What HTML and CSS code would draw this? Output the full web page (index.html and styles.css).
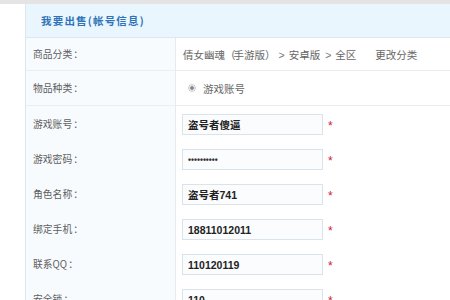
FILE: index.html
```html
<!DOCTYPE html>
<html lang="zh-CN">
<head>
<meta charset="utf-8">
<link rel="stylesheet" href="styles.css">
</head>
<body>
<div class="topbar"></div>
<div class="panel">
  <div class="head">我要出售(帐号信息)</div>
  <div class="row r-first">
    <div class="lab">商品分类<span class="colon">：</span></div>
    <div class="val"><span class="crumb">倩女幽魂<span class="par">（</span>手游版<span class="par">）</span><span class="gt">&gt;</span>安卓版<span class="gt">&gt;</span>全区</span><span class="change">更改分类</span></div>
  </div>
  <div class="row r-second">
    <div class="lab">物品种类<span class="colon">：</span></div>
    <div class="val"><span class="radio"></span><span>游戏账号</span></div>
  </div>
  <div class="row r-in">
    <div class="lab">游戏账号<span class="colon">：</span></div>
    <div class="val"><div class="inp">盗号者傻逼</div><span class="req">*</span></div>
  </div>
  <div class="row r-in">
    <div class="lab">游戏密码<span class="colon">：</span></div>
    <div class="val"><div class="inp pw">••••••••••</div><span class="req">*</span></div>
  </div>
  <div class="row r-in">
    <div class="lab">角色名称<span class="colon">：</span></div>
    <div class="val"><div class="inp">盗号者741</div><span class="req">*</span></div>
  </div>
  <div class="row r-in">
    <div class="lab">绑定手机<span class="colon">：</span></div>
    <div class="val"><div class="inp">18811012011</div><span class="req">*</span></div>
  </div>
  <div class="row r-in">
    <div class="lab">联系QQ<span class="colon">：</span></div>
    <div class="val"><div class="inp">110120119</div><span class="req">*</span></div>
  </div>
  <div class="row r-in">
    <div class="lab">安全锁<span class="colon">：</span></div>
    <div class="val"><div class="inp">110</div><span class="req">*</span></div>
  </div>
</div>
</body>
</html>
```

FILE: styles.css
```css
html, body {
  margin: 0;
  padding: 0;
  background: #ffffff;
  overflow: hidden;
}
body {
  width: 450px;
  height: 300px;
  font-family: "Liberation Sans", "Noto Sans CJK SC", sans-serif;
  font-size: 10.5px;
  color: #555;
}
.topbar {
  height: 4px;
  background: #e4e4e4;
}
.panel {
  margin-left: 25px;
  border-left: 1px solid #dce7ef;
  width: 500px;
}
.head {
  height: 33px;
  background: #eaf6fd;
  border-bottom: 1px solid #dde8ef;
  display: flex;
  align-items: center;
  padding-left: 15px;
  font-family: "Noto Sans CJK SC", sans-serif;
  font-weight: bold;
  font-size: 10.5px;
  letter-spacing: 1.2px;
  color: #2f74b8;
}
.row {
  display: grid;
  grid-template-columns: 150px 1fr;
}
.lab {
  background: #f7fbfe;
  border-right: 1px solid #e3ebf1;
  padding-left: 7px;
  display: flex;
  align-items: center;
  font-family: "Noto Sans CJK SC", sans-serif;
  font-size: 9.8px;
  color: #5e5e5e;
}
.colon {
  margin-left: 1px;
}
.val {
  display: flex;
  align-items: center;
  padding-left: 7px;
  font-family: "Noto Sans CJK SC", sans-serif;
  color: #666;
}
.r-first {
  height: 32px;
  border-bottom: 1px solid #e8eef2;
}
.r-second {
  height: 34px;
  border-bottom: 1px solid #e8eef2;
}
.r-in {
  height: 35px;
}
.r-in .val {
  padding-left: 6px;
  padding-top: 2px;
}
.par {
  letter-spacing: -2px;
}
.gt {
  font-family: "Liberation Sans", sans-serif;
  margin: 0 4px 0 5px;
  color: #777;
}
.change {
  margin-left: 19px;
}
.radio {
  width: 6px;
  height: 6px;
  border-radius: 50%;
  background: radial-gradient(circle, #888 0 1.5px, #e8e8e8 2px);
  border: 1px solid #d0d0d0;
  margin-left: 5px;
  margin-right: 7px;
}
.inp {
  box-sizing: border-box;
  width: 141px;
  height: 21px;
  border: 1px solid #dbe3ea;
  background: #fafcfe;
  display: flex;
  align-items: center;
  padding-left: 5px;
  font-family: "Liberation Sans", "Noto Sans CJK SC", sans-serif;
  font-weight: bold;
  font-size: 10.5px;
  color: #222;
}
.pw {
  font-size: 8.5px;
  color: #333;
}
.req {
  margin-left: 5px;
  color: #d02030;
  font-size: 12px;
  font-family: "Liberation Sans", sans-serif;
  line-height: 1;
  padding-top: 3px;
}
```
